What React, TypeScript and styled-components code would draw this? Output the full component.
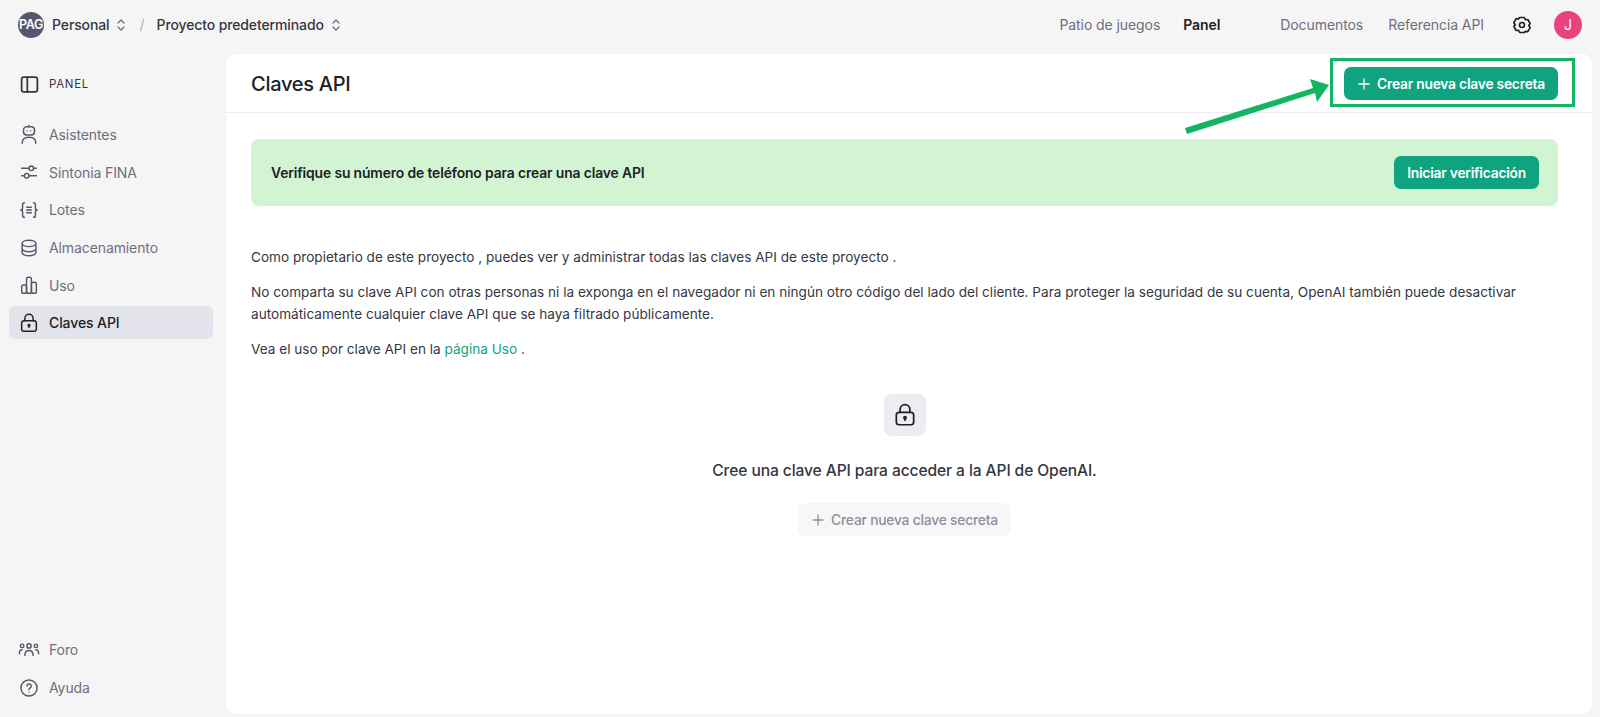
import React from "react";
import styled, { createGlobalStyle } from "styled-components";

const Global = createGlobalStyle`
  html, body { margin: 0; padding: 0; height: 100%; background: #f5f5f6; }
  body { font-family: Inter, "Liberation Sans", sans-serif; color: #202123; overflow: hidden; }
  #root { height: 100%; }
  * { box-sizing: border-box; }
`;

const Page = styled.div`
  width: 1600px; height: 717px; display: flex; flex-direction: column; background: #f5f5f6;
`;
const TopBar = styled.header`
  height: 54px; flex: none; display: flex; align-items: center; justify-content: space-between;
  padding: 0 18px 5px 18px;
`;
const Crumbs = styled.div`display: flex; align-items: center;`;
const OrgAvatar = styled.div`
  width: 26px; height: 26px; border-radius: 50%; background: #56566f; color: #fff;
  display: flex; align-items: center; justify-content: center; font-size: 12.5px; font-weight: 600;
  letter-spacing: -0.3px; margin-right: 8px; white-space: nowrap;
`;
const CrumbText = styled.span`font-size: 14px; font-weight: 500; color: #353740; letter-spacing: -0.12px;`;
const Chevrons = styled.svg`width: 12px; height: 14px; margin-left: 6px; color: #6e6e80; flex: none;`;
const Slash = styled.span`color: #acacbe; font-size: 14px; margin: 0 12px 0 12px;`;
const TopNav = styled.nav`display: flex; align-items: center;`;
const TopLink = styled.a<{ $active?: boolean; $gap: number }>`
  font-size: 14px; letter-spacing: -0.08px; margin-right: ${p => p.$gap}px;
  color: ${p => (p.$active ? "#202123" : "#6e6e80")};
  font-weight: ${p => (p.$active ? 600 : 400)};
`;
const UserAvatar = styled.div`
  width: 28px; height: 28px; border-radius: 50%; background: #e8437f; color: #fff;
  display: flex; align-items: center; justify-content: center; font-size: 14px; margin-left: 22px;
`;
const Body = styled.div`flex: 1; min-height: 0; display: flex; padding-bottom: 3px;`;
const Sidebar = styled.aside`
  width: 226px; flex: none; display: flex; flex-direction: column; justify-content: space-between;
  padding: 0 13px 10px 9px;
`;
const SideHead = styled.div`
  display: flex; align-items: center; gap: 9px; height: 30px; margin: 15px 0 19px; padding-left: 10px;
  font-size: 11.5px; letter-spacing: 0.7px; color: #353740;
  svg { width: 21px; height: 21px; }
`;
const SideGroup = styled.div`display: flex; flex-direction: column; gap: 4.7px;`;
const SideItem = styled.a<{ $active?: boolean }>`
  height: 33px; display: flex; align-items: center; gap: 9px; padding-left: 9px; border-radius: 6px;
  font-size: 14px; letter-spacing: -0.1px;
  color: ${p => (p.$active ? "#202123" : "#6e6e80")};
  font-weight: ${p => (p.$active ? 500 : 400)};
  background: ${p => (p.$active ? "#e3e3ec" : "transparent")};
  svg { flex: none; color: ${p => (p.$active ? "#202123" : "#565869")}; }
`;
const Card = styled.main`
  position: relative; flex: 1; margin-right: 8px; background: #fff; border-radius: 8px;
  box-shadow: 0 0 1px rgba(0,0,0,.12); display: flex; flex-direction: column; min-width: 0;
`;
const CardHeader = styled.div`
  height: 59px; flex: none; padding: 1px 34px 0 25px; display: flex; align-items: center;
  justify-content: space-between; border-bottom: 1px solid #ececf1;
`;
const Title = styled.h1`margin: 0; font-size: 20px; font-weight: 500; color: #202123; letter-spacing: -0.27px;`;
const PrimaryButton = styled.button<{ $wide?: boolean }>`
  height: 33px; border: 0; border-radius: 7px; background: #10a37f; color: #fff;
  font-family: inherit; font-size: 13.8px; font-weight: 600; letter-spacing: -0.22px;
  display: inline-flex; align-items: center; gap: 6px;
  padding: 0 13px 0 13px;
`;
const Content = styled.div`flex: 1; padding: 26px 34px 0 25px; display: flex; flex-direction: column;`;
const Banner = styled.div`
  height: 67px; flex: none; border-radius: 8px; background: #d2f4d3; display: flex; align-items: center;
  justify-content: space-between; padding: 0 19px 0 20px;
`;
const BannerText = styled.span`font-size: 13.9px; font-weight: 600; color: #202123; letter-spacing: -0.14px;`;
const Para = styled.p`
  margin: 0 0 13px; font-size: 13.6px; line-height: 22px; color: #353740;
  &:first-of-type { margin-top: 40px; }
`;
const Link = styled.a`color: #10a37f;`;
const Empty = styled.section`display: flex; flex-direction: column; align-items: center; margin-top: 21px;`;
const LockTile = styled.div`
  width: 42px; height: 42px; border-radius: 8px; background: #ececf1; display: flex; align-items: center;
  justify-content: center; color: #202123;
`;
const EmptyText = styled.p`margin: 24px 0 0; font-size: 15.6px; line-height: 22px; color: #353740; font-weight: 500; letter-spacing: -0.1px;`;
const GhostButton = styled.button`
  margin-top: 21px; height: 33px; width: 213px; border: 0; border-radius: 7px; background: #f7f7f8; color: #8e8ea0;
  font-family: inherit; font-size: 13.8px; font-weight: 500; letter-spacing: -0.2px;
  display: inline-flex; align-items: center; justify-content: center; gap: 6px;
`;
const Highlight = styled.div`
  position: absolute; left: 1104px; top: 4px; width: 245px; height: 49px; border: 3px solid #12b560;
`;
const Arrow = styled.svg`position: absolute; left: 955px; top: 24px; width: 160px; height: 70px;`;

const ChevUpDown = () => (
  <Chevrons viewBox="0 0 12 14" fill="none" stroke="currentColor" strokeWidth="1.3" strokeLinecap="round" strokeLinejoin="round">
    <path d="M3 5l3-3 3 3M3 9l3 3 3-3" />
  </Chevrons>
);
const base = { width: 22, height: 22, viewBox: "0 0 24 24", fill: "none", stroke: "currentColor", strokeWidth: 1.6, strokeLinecap: "round" as const, strokeLinejoin: "round" as const };
const LockIcon = ({ size = 22 }: { size?: number }) => (
  <svg {...base} width={size} height={size}><rect x="4" y="9.500" width="16" height="11.500" rx="2.500" /><path d="M7.500 9.500V7a4.500 4.500 0 0 1 9 0v2.500" /><circle cx="12" cy="14.500" r="1" fill="currentColor" /><path d="M12 15v1.800" /></svg>
);

export default function App() {
  return (
    <Page>
      <Global />
      <TopBar>
        <Crumbs>
          <OrgAvatar>PAG</OrgAvatar>
          <CrumbText>Personal</CrumbText>
          <ChevUpDown />
          <Slash>/</Slash>
          <CrumbText>Proyecto predeterminado</CrumbText>
          <ChevUpDown />
        </Crumbs>
        <TopNav>
          <TopLink $gap={23}>Patio de juegos</TopLink>
          <TopLink $active $gap={60}>Panel</TopLink>
          <TopLink $gap={25}>Documentos</TopLink>
          <TopLink $gap={28}>Referencia API</TopLink>
          <svg width="20" height="20" viewBox="0 0 24 24" fill="none" stroke="#202123" strokeWidth="2" strokeLinejoin="round">
            <path d="M9.200 3h5.600l1.200 2.700 3-.3 2.800 4.900-1.800 2.400 1.800 2.400-2.800 4.900-3-.3L14.800 21H9.200L8 18.300l-3 .3-2.800-4.900L4 11.700 2.200 9.300 5 4.400l3 .3z" />
            <circle cx="12" cy="12" r="3" />
          </svg>
          <UserAvatar>J</UserAvatar>
        </TopNav>
      </TopBar>
      <Body>
        <Sidebar>
          <div>
            <SideHead>
              <svg {...base} strokeWidth={2}><rect x="3" y="3.500" width="18" height="17" rx="2.500" /><path d="M9.500 3.500v17" /></svg>
              PANEL
            </SideHead>
            <SideGroup>
              <SideItem>
                <svg {...base}><rect x="6" y="3" width="12" height="9" rx="3.500" /><path d="M10 7.500h.01M14 7.500h.01M4.500 21c0-4 3-6.500 7.500-6.500s7.500 2.500 7.500 6.500M12 1.500V3" /></svg>
                Asistentes
              </SideItem>
              <SideItem>
                <svg {...base}><circle cx="14.500" cy="8" r="2.500" /><circle cx="9.500" cy="16" r="2.500" /><path d="M4 8h8M17 8h3M4 16h3M12 16h8" /></svg>
                Sintonia FINA
              </SideItem>
              <SideItem>
                <svg {...base}><path d="M7 4C5.500 4 5 5 5 6.300v3.400C5 11 4 12 3 12c1 0 2 1 2 2.300v3.400C5 19 5.500 20 7 20M17 4c1.500 0 2 1 2 2.300v3.400c0 1.300 1 2.300 2 2.300-1 0-2 1-2 2.300v3.400c0 1.300-.5 2.300-2 2.300M9.500 9h5M9.500 12h5M9.500 15h5" /></svg>
                Lotes
              </SideItem>
              <SideItem>
                <svg {...base}><path d="M4.500 7c0-2 3.400-3.500 7.500-3.500S19.500 5 19.500 7v10c0 2-3.400 3.500-7.500 3.500S4.500 19 4.500 17zM4.500 7c0 2 3.400 3.500 7.500 3.500S19.500 9 19.500 7M4.500 12.500c0 2 3.400 3.500 7.500 3.500s7.500-1.500 7.500-3.500" /></svg>
                Almacenamiento
              </SideItem>
              <SideItem>
                <svg {...base}><rect x="4" y="12" width="5.300" height="9" rx="2" /><rect x="9.300" y="3.500" width="5.300" height="17.500" rx="2" /><rect x="14.700" y="9" width="5.300" height="12" rx="2" /></svg>
                Uso
              </SideItem>
              <SideItem $active>
                <LockIcon />
                Claves API
              </SideItem>
            </SideGroup>
          </div>
          <SideGroup>
            <SideItem>
              <svg {...base} strokeWidth={1.6}><circle cx="12" cy="7.500" r="2.300" /><path d="M7.500 18c0-3.500 1.800-5.500 4.500-5.500s4.500 2 4.500 5.500" /><circle cx="4.500" cy="7.500" r="1.900" /><path d="M1.500 16c0-2.500 1-4.300 3-4.300" /><circle cx="19.500" cy="7.500" r="1.900" /><path d="M22.500 16c0-2.500-1-4.300-3-4.300" /></svg>
              Foro
            </SideItem>
            <SideItem>
              <svg {...base}><circle cx="12" cy="12" r="8.800" /><path d="M9.800 9.800a2.300 2.300 0 1 1 3.500 2c-.8.500-1.300 1-1.300 1.800" /><path d="M12 16.500h.01" /></svg>
              Ayuda
            </SideItem>
          </SideGroup>
        </Sidebar>
        <Card>
          <CardHeader>
            <Title>Claves API</Title>
            <PrimaryButton>
              <svg width="14" height="14" viewBox="0 0 14 14" stroke="currentColor" strokeWidth="1.300" strokeLinecap="round"><path d="M7 2v10M2 7h10" /></svg>
              Crear nueva clave secreta
            </PrimaryButton>
          </CardHeader>
          <Content>
            <Banner>
              <BannerText>Verifique su número de teléfono para crear una clave API</BannerText>
              <PrimaryButton>Iniciar verificación</PrimaryButton>
            </Banner>
            <Para>Como propietario de este proyecto , puedes ver y administrar todas las claves API de este proyecto .</Para>
            <Para>No comparta su clave API con otras personas ni la exponga en el navegador ni en ningún otro código del lado del cliente. Para proteger la seguridad de su cuenta, OpenAI también puede desactivar automáticamente cualquier clave API que se haya filtrado públicamente.</Para>
            <Para>Vea el uso por clave API en la <Link>página Uso</Link> .</Para>
            <Empty>
              <LockTile><LockIcon size={26} /></LockTile>
              <EmptyText>Cree una clave API para acceder a la API de OpenAI.</EmptyText>
              <GhostButton>
                <svg width="14" height="14" viewBox="0 0 14 14" stroke="currentColor" strokeWidth="1.300" strokeLinecap="round"><path d="M7 2v10M2 7h10" /></svg>
                Crear nueva clave secreta
              </GhostButton>
            </Empty>
          </Content>
          <Highlight />
          <Arrow viewBox="0 0 160 70" fill="#12b560">
            <path d="M4 50 L132 10 L129 1 L148 7 L136 24 L134 15 L6 56 Z" />
          </Arrow>
        </Card>
      </Body>
    </Page>
  );
}
